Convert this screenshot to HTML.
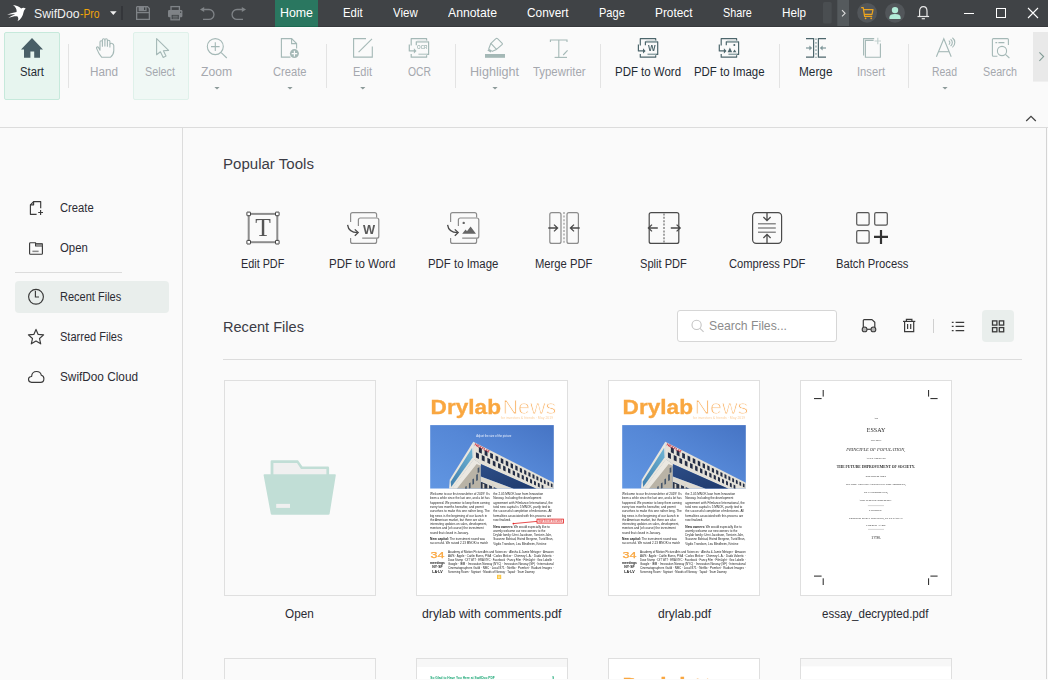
<!DOCTYPE html>
<html><head><meta charset="utf-8"><title>SwifDoo PDF</title>
<style>
html,body{margin:0;padding:0;}
body{width:1048px;height:680px;overflow:hidden;background:#fafafa;position:relative;font-family:"Liberation Sans",sans-serif;}
.t{position:absolute;white-space:nowrap;line-height:1;transform-origin:0 0;}
.a{position:absolute;}
svg{position:absolute;overflow:visible;}

</style></head><body>
<div class="a" style="left:0;top:0;width:1048px;height:26px;background:#404346;border-bottom:1px solid #37393c"></div>
<div class="a" style="left:275px;top:0;width:43px;height:26px;background:#2a7760;border-bottom:1px solid #1d6951"></div>
<div class="a" style="left:0;top:27px;width:1048px;height:1px;background:#ffffff"></div>
<span class="t" style="left:33.60px;top:7.00px;font-size:13px;color:#f2f2f2;transform:scaleX(0.9400);">SwifDoo</span>
<span class="t" style="left:80.10px;top:7.00px;font-size:13px;color:#f0a30a;transform:scaleX(0.7939);">-Pro</span>
<span class="t" style="left:280.00px;top:7.16px;font-size:12.8px;color:#ffffff;transform:scaleX(0.9666);">Home</span>
<span class="t" style="left:343.00px;top:7.16px;font-size:12.8px;color:#ffffff;transform:scaleX(0.8890);">Edit</span>
<span class="t" style="left:392.90px;top:7.16px;font-size:12.8px;color:#ffffff;transform:scaleX(0.8967);">View</span>
<span class="t" style="left:447.60px;top:7.16px;font-size:12.8px;color:#ffffff;transform:scaleX(0.9564);">Annotate</span>
<span class="t" style="left:527.00px;top:7.16px;font-size:12.8px;color:#ffffff;transform:scaleX(0.9261);">Convert</span>
<span class="t" style="left:599.00px;top:7.16px;font-size:12.8px;color:#ffffff;transform:scaleX(0.8631);">Page</span>
<span class="t" style="left:655.10px;top:7.16px;font-size:12.8px;color:#ffffff;transform:scaleX(0.9249);">Protect</span>
<span class="t" style="left:722.80px;top:7.16px;font-size:12.8px;color:#ffffff;transform:scaleX(0.8436);">Share</span>
<span class="t" style="left:782.10px;top:7.16px;font-size:12.8px;color:#ffffff;transform:scaleX(0.9159);">Help</span>
<div class="a" style="left:0;top:127px;width:1048px;height:1px;background:#dcdcdc"></div>
<div class="a" style="left:4px;top:32px;width:54px;height:66px;background:#e7f5ef;border:1px solid #c6e9db;border-radius:2px"></div>
<div class="a" style="left:133px;top:32px;width:54px;height:66px;background:#f0f8f5;border:1px solid #dff1ea;border-radius:2px"></div>
<div class="a" style="left:68px;top:44px;width:1px;height:44px;background:#e3e3e3"></div>
<div class="a" style="left:326px;top:44px;width:1px;height:44px;background:#e3e3e3"></div>
<div class="a" style="left:455px;top:44px;width:1px;height:44px;background:#e3e3e3"></div>
<div class="a" style="left:600px;top:44px;width:1px;height:44px;background:#e3e3e3"></div>
<div class="a" style="left:779px;top:44px;width:1px;height:44px;background:#e3e3e3"></div>
<div class="a" style="left:908px;top:44px;width:1px;height:44px;background:#e3e3e3"></div>
<span class="t" style="left:19.80px;top:65.64px;font-size:12px;color:#1f2b33;transform:scaleX(0.9391);">Start</span>
<span class="t" style="left:90.20px;top:65.64px;font-size:12px;color:#a5a8ae;transform:scaleX(0.9725);">Hand</span>
<span class="t" style="left:145.10px;top:65.64px;font-size:12px;color:#a5a8ae;transform:scaleX(0.8993);">Select</span>
<span class="t" style="left:201.10px;top:65.64px;font-size:12px;color:#a5a8ae;transform:scaleX(1.0107);">Zoom</span>
<span class="t" style="left:273.10px;top:65.64px;font-size:12px;color:#a5a8ae;transform:scaleX(0.9302);">Create</span>
<span class="t" style="left:353.10px;top:65.64px;font-size:12px;color:#a5a8ae;transform:scaleX(0.9191);">Edit</span>
<span class="t" style="left:407.60px;top:65.64px;font-size:12px;color:#a5a8ae;transform:scaleX(0.8623);">OCR</span>
<span class="t" style="left:470.10px;top:65.64px;font-size:12px;color:#a5a8ae;transform:scaleX(1.0495);">Highlight</span>
<span class="t" style="left:532.60px;top:65.64px;font-size:12px;color:#a5a8ae;transform:scaleX(0.9486);">Typewriter</span>
<span class="t" style="left:615.10px;top:65.64px;font-size:12px;color:#1f2b33;transform:scaleX(0.9548);">PDF to Word</span>
<span class="t" style="left:694.10px;top:65.64px;font-size:12px;color:#1f2b33;transform:scaleX(0.9523);">PDF to Image</span>
<span class="t" style="left:799.10px;top:65.64px;font-size:12px;color:#1f2b33;transform:scaleX(0.9848);">Merge</span>
<span class="t" style="left:857.10px;top:65.64px;font-size:12px;color:#a5a8ae;transform:scaleX(0.9328);">Insert</span>
<span class="t" style="left:932.10px;top:65.64px;font-size:12px;color:#a5a8ae;transform:scaleX(0.8715);">Read</span>
<span class="t" style="left:983.10px;top:65.64px;font-size:12px;color:#a5a8ae;transform:scaleX(0.8944);">Search</span>
<div class="a" style="left:182px;top:128px;width:1px;height:551px;background:#dcdcdc"></div>
<div class="a" style="left:1046px;top:128px;width:1px;height:551px;background:#d4d4d4"></div>
<div class="a" style="left:15px;top:272px;width:107px;height:1px;background:#dcdcdc"></div>
<div class="a" style="left:15px;top:281px;width:154px;height:32px;background:#e9eeec;border-radius:4px"></div>
<span class="t" style="left:60.10px;top:201.84px;font-size:12px;color:#2b2b33;transform:scaleX(0.9357);">Create</span>
<span class="t" style="left:60.10px;top:241.84px;font-size:12px;color:#2b2b33;transform:scaleX(0.9469);">Open</span>
<span class="t" style="left:60.10px;top:290.84px;font-size:12px;color:#2b2b33;transform:scaleX(0.9177);">Recent Files</span>
<span class="t" style="left:60.10px;top:330.84px;font-size:12px;color:#2b2b33;transform:scaleX(0.9189);">Starred Files</span>
<span class="t" style="left:60.10px;top:370.84px;font-size:12px;color:#2b2b33;transform:scaleX(0.9827);">SwifDoo Cloud</span>
<span class="t" style="left:222.90px;top:155.96px;font-size:15.4px;color:#3c3c46;transform:scaleX(0.9777);">Popular Tools</span>
<span class="t" style="left:222.90px;top:318.86px;font-size:15.4px;color:#3c3c46;transform:scaleX(0.9459);">Recent Files</span>
<span class="t" style="left:241.30px;top:257.74px;font-size:12.0px;color:#2b2b33;transform:scaleX(0.9018);">Edit PDF</span>
<span class="t" style="left:329.10px;top:257.74px;font-size:12.0px;color:#2b2b33;transform:scaleX(0.9591);">PDF to Word</span>
<span class="t" style="left:428.20px;top:257.74px;font-size:12.0px;color:#2b2b33;transform:scaleX(0.9509);">PDF to Image</span>
<span class="t" style="left:535.00px;top:257.74px;font-size:12.0px;color:#2b2b33;transform:scaleX(0.9357);">Merge PDF</span>
<span class="t" style="left:639.80px;top:257.74px;font-size:12.0px;color:#2b2b33;transform:scaleX(0.9236);">Split PDF</span>
<span class="t" style="left:729.20px;top:257.74px;font-size:12.0px;color:#2b2b33;transform:scaleX(0.9315);">Compress PDF</span>
<span class="t" style="left:836.00px;top:257.74px;font-size:12.0px;color:#2b2b33;transform:scaleX(0.9357);">Batch Process</span>
<div class="a" style="left:677px;top:310px;width:158px;height:30px;background:#fff;border:1px solid #d6d6d6;border-radius:3px"></div>
<span class="t" style="left:709.40px;top:318.87px;font-size:13.5px;color:#8c8c8c;transform:scaleX(0.9029);">Search Files...</span>
<div class="a" style="left:982px;top:310px;width:32px;height:32px;background:#e9eeec;border-radius:4px"></div>
<div class="a" style="left:933px;top:319px;width:1px;height:14px;background:#d0d0d0"></div>
<div class="a" style="left:223px;top:359px;width:799px;height:1px;background:#dcdcdc"></div>
<div class="a" style="left:224px;top:380px;width:150px;height:214px;background:#fafafa;border:1px solid #dfdfdf"></div>
<div class="a" style="left:224px;top:658px;width:150px;height:20px;background:#fafafa;border:1px solid #dfdfdf;border-bottom:none"></div>
<div class="a" style="left:416px;top:380px;width:150px;height:214px;background:#fff;border:1px solid #dfdfdf"></div>
<div class="a" style="left:416px;top:658px;width:150px;height:20px;background:#fff;border:1px solid #dfdfdf;border-bottom:none"></div>
<div class="a" style="left:608px;top:380px;width:150px;height:214px;background:#fff;border:1px solid #dfdfdf"></div>
<div class="a" style="left:608px;top:658px;width:150px;height:20px;background:#fff;border:1px solid #dfdfdf;border-bottom:none"></div>
<div class="a" style="left:800px;top:380px;width:150px;height:214px;background:#fff;border:1px solid #dfdfdf"></div>
<div class="a" style="left:800px;top:658px;width:150px;height:20px;background:#fff;border:1px solid #dfdfdf;border-bottom:none"></div>
<span class="t" style="left:284.80px;top:607.89px;font-size:12.3px;color:#2b2b33;transform:scaleX(0.9542);">Open</span>
<span class="t" style="left:421.60px;top:607.89px;font-size:12.3px;color:#2b2b33;transform:scaleX(0.9997);">drylab with comments.pdf</span>
<span class="t" style="left:657.50px;top:607.89px;font-size:12.3px;color:#2b2b33;transform:scaleX(0.9828);">drylab.pdf</span>
<span class="t" style="left:822.20px;top:607.89px;font-size:12.3px;color:#2b2b33;transform:scaleX(0.9374);">essay_decrypted.pdf</span>
<svg width="1048" height="680" viewBox="0 0 1048 680" style="left:0;top:0;will-change:transform"><g><path d="M13 4.9 C16.6 5.2 19.4 6.6 21.2 8.6 C22.6 7.4 24.2 7.5 25.8 8.7 C24.6 9.3 24 10.4 23.6 12 C22.9 16 20.8 19.6 17.4 21.2 C18.6 19.4 18.6 17.9 17.6 16.4 C15 16.1 12 16.6 8.4 17.9 C10.8 16.1 13 15.2 15.2 14.5 C12.6 14.2 10 14.3 7.2 14.9 C10.4 13 13.8 12.4 16.6 11.9 C17 9.4 15.6 6.6 13 4.9 Z" fill="#ffffff"/>
<polygon points="110,11.3 116.6,11.3 113.3,15" fill="#f0f0f0"/>
<rect x="121.5" y="6" width="1" height="14" fill="#282b2e"/>
<g fill="none" stroke="#7f8387" stroke-width="1.3"><path d="M137.2 6.65 H147.5 L149.35 8.5 V19.35 H136.65 V7.2 Z"/><path d="M136.7 12.6 H149.3"/></g><rect x="138.6" y="6.6" width="8" height="4.6" fill="#7f8387"/><rect x="144" y="7.4" width="1.3" height="2.6" fill="#3e4245"/>
<g><rect x="171" y="6.6" width="8.4" height="4" fill="none" stroke="#7f8387" stroke-width="1.3"/><rect x="168" y="10" width="14.4" height="7.2" rx="1.2" fill="#7f8387"/><rect x="171" y="14.2" width="8.4" height="5.6" fill="#3e4245" stroke="#7f8387" stroke-width="1.3"/><path d="M172.6 16.2 H177.8 M172.6 18 H177.8" stroke="#7f8387" stroke-width="0.9"/><rect x="180" y="11.6" width="1.2" height="1.2" fill="#3e4245"/></g>
<g fill="none" stroke="#7f8387" stroke-width="1.3"><path d="M203 19.4 H209 A4.95 4.95 0 0 0 209 9.5 H203"/><path d="M243 19.4 H237 A4.95 4.95 0 0 1 237 9.5 H243"/></g><polygon points="200,9.5 204.2,7 204.2,12" fill="#7f8387"/><polygon points="246,9.5 241.8,7 241.8,12" fill="#7f8387"/>
<rect x="823" y="2" width="8.7" height="21.6" rx="1.5" fill="#4a4e51"/>
<rect x="837.3" y="0" width="11.7" height="26" fill="#555a5d"/>
<path d="M842 10.2 L845.1 13.3 L842 16.4" fill="none" stroke="#dcdcdc" stroke-width="1.1"/>
<circle cx="867.1" cy="12.8" r="9.9" fill="#52565a"/>
<g fill="none" stroke="#eda51e" stroke-width="1.2" stroke-linejoin="round"><path d="M861.2 7.6 H863.2 L864.6 16.3 H872.2"/><path d="M863.6 9.6 H873 L872 14.4 H864.3"/></g><circle cx="865.6" cy="18.3" r="0.9" fill="#eda51e"/><circle cx="871.2" cy="18.3" r="0.9" fill="#eda51e"/>
<circle cx="895" cy="12.8" r="9.9" fill="#52565a"/>
<circle cx="895" cy="10.1" r="3.2" fill="#b2ecd8"/><path d="M889.4 18.9 V17.4 C889.4 15 891.4 13.9 895 13.9 C898.6 13.9 900.6 15 900.6 17.4 V18.9 Z" fill="#b2ecd8"/>
<g fill="none" stroke="#e8e8e8" stroke-width="1.2"><path d="M919.6 16.4 V11.2 C919.6 8.4 921 6.6 923.3 6.6 C925.6 6.6 927 8.4 927 11.2 V16.4"/><path d="M917.5 16.5 H929.1"/><path d="M921.7 18.7 H924.9"/></g>
<path d="M964 13.5 H974" stroke="#ffffff" stroke-width="1"/>
<rect x="996.5" y="8.5" width="9" height="9" fill="none" stroke="#ffffff" stroke-width="1"/>
<path d="M1028 8 L1038 18 M1038 8 L1028 18" stroke="#ffffff" stroke-width="1.1"/>
<path d="M32 38 L43 49.6 H40 V57.8 H34.2 V51.6 H30.4 V57.8 H24 V49.6 H21 Z" fill="#495f67"/>
<g fill="none" stroke="#a4b8b6" stroke-width="1.1" stroke-linejoin="round"><path d="M101.8 57.3 C99.6 55 97.8 51.6 96.6 48.4 C96.1 47 97.7 46.2 98.5 47.5 L100 50.2 V41.9 C100 40.3 102.4 40.3 102.4 41.9 V40 C102.4 38.4 104.9 38.4 104.9 40 C104.9 38.4 107.4 38.4 107.4 40 V41.4 C107.4 39.8 109.9 39.8 109.9 41.4 V44 C110.6 42.6 113.8 43.2 113.8 45.8 V50.4 C113.8 53.4 112.4 55.6 110.4 57.3 Z"/><path d="M102.4 41.9 V46.8 M104.9 40 V46.6 M107.4 41.4 V46.8 M109.9 44 V47.4"/></g>
<path d="M156.6 38.6 V54.8 L160.4 51.8 L163.2 57.4 L166 56.1 L163.4 50.8 L168.6 50.4 Z" fill="none" stroke="#a4b8b6" stroke-width="1.1" stroke-linejoin="round"/>
<g fill="none" stroke="#a4b8b6" stroke-width="1.1"><circle cx="215.3" cy="46.6" r="8"/><path d="M221.2 52.6 L226.8 58"/><path d="M211 46.6 H219.6 M215.3 42.3 V50.9"/></g>
<polygon points="214.4,86.9 219.6,86.9 217,89.5" fill="#8c9a99"/>
<polygon points="287.4,86.9 292.6,86.9 290,89.5" fill="#8c9a99"/>
<polygon points="360.2,86.9 365.40000000000003,86.9 362.8,89.5" fill="#8c9a99"/>
<polygon points="492.4,86.9 497.6,86.9 495,89.5" fill="#8c9a99"/>
<polygon points="942.4,86.9 947.6,86.9 945,89.5" fill="#8c9a99"/>
<g fill="none" stroke="#a4b8b6" stroke-width="1.1"><path d="M290.5 57.1 H281.4 V38.6 H291.6 L296.6 43.6 V48.6"/><path d="M291.6 38.6 V43.6 H296.6"/></g><circle cx="294.4" cy="53.6" r="4.5" fill="#a4b8b6"/><path d="M291.6 53.6 H297.2 M294.4 50.8 V56.4" stroke="#fafafa" stroke-width="1.2"/>
<g fill="none" stroke="#a4b8b6" stroke-width="1.1"><path d="M366 38.6 H353.6 V57.1 H372.3 V46.6"/><path d="M358.6 52.2 L372 38.8"/></g>
<g fill="none" stroke="#a4b8b6" stroke-width="1.2" stroke-linejoin="round"><path d="M411.2 45.6 V38.7 H426.59999999999997 V40.6"/><path d="M411.2 54 V57.2 H426.59999999999997 V55.2"/><path d="M416.3 45.2 V41.8 H428.59999999999997 V54.4 H426.8"/><path d="M409.3 44.4 V50.9 H414.90000000000003"/></g><path d="M417.2 41.3 H427.8" stroke="#c3d1cf" stroke-width="1.2"/><path d="M418.4 54.3 H427.2" stroke="#c3d1cf" stroke-width="1.5"/><polygon points="413.90000000000003,48.2 416.5,50.9 413.90000000000003,53.6" fill="#a4b8b6"/><text x="422.2" y="48.9" font-size="5.4" font-weight="bold" fill="#a4b8b6" text-anchor="middle" font-family="Liberation Sans, sans-serif" textLength="10.4" lengthAdjust="spacingAndGlyphs">OCR</text>
<g fill="none" stroke="#4d666c" stroke-width="1.2" stroke-linejoin="round"><path d="M640.3 45.6 V38.7 H655.6999999999999 V40.6"/><path d="M640.3 54 V57.2 H655.6999999999999 V55.2"/><path d="M645.4 45.2 V41.8 H657.6999999999999 V54.4 H655.9"/><path d="M638.4 44.4 V50.9 H644.0"/></g><path d="M646.3 41.3 H656.9" stroke="#8fa3a6" stroke-width="1.2"/><path d="M647.5 54.3 H656.3" stroke="#8fa3a6" stroke-width="1.5"/><polygon points="643.0,48.2 645.6,50.9 643.0,53.6" fill="#4d666c"/><text x="651.7" y="50.8" font-size="9.5" font-weight="bold" fill="#4d666c" text-anchor="middle" font-family="Liberation Sans, sans-serif" textLength="7.6" lengthAdjust="spacingAndGlyphs">W</text>
<g fill="none" stroke="#4d666c" stroke-width="1.2" stroke-linejoin="round"><path d="M721.1999999999999 45.6 V38.7 H736.5999999999999 V40.6"/><path d="M721.1999999999999 54 V57.2 H736.5999999999999 V55.2"/><path d="M726.3 45.2 V41.8 H738.5999999999999 V54.4 H736.8"/><path d="M719.3 44.4 V50.9 H724.9"/></g><path d="M727.1999999999999 41.3 H737.8" stroke="#8fa3a6" stroke-width="1.2"/><path d="M728.4 54.3 H737.1999999999999" stroke="#8fa3a6" stroke-width="1.5"/><polygon points="723.9,48.2 726.5,50.9 723.9,53.6" fill="#4d666c"/><polygon points="727.6,52.2 729.9,47.4 732.2,52.2" fill="#4d666c"/><polygon points="732.8,52.2 734.6,49.4 736.4,52.2" fill="#4d666c"/><circle cx="734.3" cy="44.9" r="1" fill="#4d666c"/>
<rect x="485" y="54" width="20" height="3.8" fill="#a4b8b6"/>
<g fill="none" stroke="#a4b8b6" stroke-width="1.1" stroke-linejoin="round"><path d="M495.9 38.7 Q496.7 37.9 497.5 38.7 L502 43.1 Q502.8 43.9 502 44.6 L496.5 49.4 L490.9 43.3 Z"/><path d="M490.9 43.3 L488.7 49 M496.5 49.4 L491.8 51.4"/></g><polygon points="487.4,50.4 490.7,52.5 492,50.6 488.8,48.7" fill="#a4b8b6"/>
<g fill="none" stroke="#a4b8b6" stroke-width="1.1"><path d="M550.4 42 V40 H567 V42"/><path d="M558.8 40 V57.4"/><path d="M554.6 57.4 H567"/><path d="M563.2 55 L567.6 50.4"/></g>
<g fill="none" stroke="#4d666c" stroke-width="1.2"><path d="M806 38.7 H813.6 V57.2 H806"/><path d="M826 38.7 H818.4 V57.2 H826"/></g><path d="M816 38.2 V58" stroke="#93a8aa" stroke-width="1.4" stroke-dasharray="1.8 1.9"/><g stroke="#7f979a" stroke-width="1.2" fill="none"><path d="M806 48 H811"/><path d="M826 48 H821"/></g><polygon points="809.4,45.4 812.2,48 809.4,50.6" fill="#7f979a"/><polygon points="822.6,45.4 819.8,48 822.6,50.6" fill="#7f979a"/>
<g fill="none" stroke="#a4b8b6" stroke-width="1.1"><path d="M863.6 55.4 V38.6 H874.2"/><path d="M873.6 40.4 H865.4 V57.2 H880.4 V43.6"/></g><path d="M874.6 41 H881 M877.8 37.8 V44.2" stroke="#c3d1cf" stroke-width="1.2"/>
<g fill="none" stroke="#a4b8b6" stroke-width="1.1"><path d="M936.4 56.8 L943.8 38.8 L951.2 56.8"/><path d="M938.6 51.7 H949"/><path d="M948.8 40.6 A2.4 2.4 0 0 1 948.8 44.6"/><path d="M950.6 39.2 A4.2 4.2 0 0 1 950.6 46"/><path d="M952.4 37.8 A6 6 0 0 1 952.4 47.4"/></g>
<g fill="none" stroke="#a4b8b6" stroke-width="1.1"><path d="M997.4 56.2 H993.4 Q992.4 56.2 992.4 55.2 V39.6 Q992.4 38.6 993.4 38.6 H1007.4 Q1008.4 38.6 1008.4 39.6 V45"/><circle cx="1002" cy="51" r="4.6"/><path d="M1005.4 54.4 L1009.4 58"/><path d="M995.4 42.6 H997.2 M998.4 42.6 H1004.4"/></g>
<rect x="1033" y="32" width="15" height="49.6" fill="#e9e9e9"/>
<path d="M1039.4 52.4 L1043.6 56.6 L1039.4 60.8" fill="none" stroke="#7f9a94" stroke-width="1.1"/>
<path d="M1026.2 121 L1031 116.4 L1035.8 121" fill="none" stroke="#444" stroke-width="1.3"/>
<g fill="none" stroke="#3a3a3a" stroke-width="1.15" stroke-linejoin="round"><path d="M36.6 214.3 H30.4 V204.8 L33.6 201.6 H40.7 V208.2"/><path d="M30.4 204.8 H33.6 V201.6"/><path d="M38.2 212.5 H43 M40.6 210.1 V214.9"/></g>
<g fill="none" stroke="#3a3a3a" stroke-width="1.15" stroke-linejoin="round"><path d="M30.4 242.7 H35.6 V246 H42.4 V253.4 Q42.4 254.2 41.6 254.2 H30.4 Q29.6 254.2 29.6 253.4 V243.5 Q29.6 242.7 30.4 242.7 Z"/></g><rect x="36" y="243.6" width="6.9" height="2" fill="#8a8a8a"/><path d="M36 243.6 H42.4 V246" fill="none" stroke="#3a3a3a" stroke-width="0.9"/><rect x="32.4" y="250.6" width="6.2" height="1.5" fill="#8a8a8a"/>
<g fill="none" stroke="#3a3a3a" stroke-width="1.15"><circle cx="36" cy="296.8" r="7.4"/><path d="M35.4 290.8 V297 H39"/></g>
<polygon points="36.00,329.40 38.17,334.41 43.61,334.93 39.52,338.54 40.70,343.87 36.00,341.10 31.30,343.87 32.48,338.54 28.39,334.93 33.83,334.41" fill="none" stroke="#3a3a3a" stroke-width="1.15" stroke-linejoin="round"/>
<path d="M31.6 382.3 C29.6 382.3 28.5 380.9 28.5 379.3 C28.5 377.6 29.9 376.4 31.6 376.5 C31.8 373.6 33.8 371.5 36.6 371.5 C39 371.5 40.8 373 41.3 375.2 C43 375.5 43.9 377 43.9 378.7 C43.9 380.7 42.5 382.3 40.6 382.3 Z" fill="none" stroke="#3a3a3a" stroke-width="1.15"/>
<rect x="248.7" y="213.9" width="28.6" height="28.3" fill="none" stroke="#8c8c8c" stroke-width="2"/>
<rect x="246.89999999999998" y="212.1" width="3.6" height="3.6" rx="0.3" fill="#fff" stroke="#444" stroke-width="1"/>
<rect x="275.5" y="212.1" width="3.6" height="3.6" rx="0.3" fill="#fff" stroke="#444" stroke-width="1"/>
<rect x="246.89999999999998" y="240.39999999999998" width="3.6" height="3.6" rx="0.3" fill="#fff" stroke="#444" stroke-width="1"/>
<rect x="275.5" y="240.39999999999998" width="3.6" height="3.6" rx="0.3" fill="#fff" stroke="#444" stroke-width="1"/>
<text x="263" y="236" font-size="25.5" fill="#555" text-anchor="middle" font-family="Liberation Serif, serif">T</text>
<g fill="none" stroke="#8c8c8c" stroke-width="1.2" stroke-linejoin="round"><path d="M350.6 222 V214.6 Q350.6 212.6 352.6 212.6 H374.6 Q376.6 212.6 376.6 214.6 V217.6"/><path d="M350.6 238 V241.4 Q350.6 243.4 352.6 243.4 H374.6 Q376.6 243.4 376.6 241.4 V238.6"/><path d="M358.40000000000003 226 V220 Q358.40000000000003 218 360.40000000000003 218 H376.8 Q378.8 218 378.8 220 V236.2 Q378.8 238.2 376.8 238.2 H362.20000000000005"/></g><path d="M347.6 224.8 C348.20000000000005 229.6 352.20000000000005 232.4 357.6 232.6" fill="none" stroke="#4a4a4a" stroke-width="1.3"/><path d="M354.8 229.4 L358.20000000000005 232.6 L354.8 235.8" fill="none" stroke="#4a4a4a" stroke-width="1.3"/><text x="369.1" y="233.6" font-size="12.8" font-weight="bold" fill="#5a5a5a" text-anchor="middle" font-family="Liberation Sans, sans-serif">W</text>
<g fill="none" stroke="#8c8c8c" stroke-width="1.2" stroke-linejoin="round"><path d="M450.6 222 V214.6 Q450.6 212.6 452.6 212.6 H474.6 Q476.6 212.6 476.6 214.6 V217.6"/><path d="M450.6 238 V241.4 Q450.6 243.4 452.6 243.4 H474.6 Q476.6 243.4 476.6 241.4 V238.6"/><path d="M458.40000000000003 226 V220 Q458.40000000000003 218 460.40000000000003 218 H476.8 Q478.8 218 478.8 220 V236.2 Q478.8 238.2 476.8 238.2 H462.20000000000005"/></g><path d="M447.6 224.8 C448.20000000000005 229.6 452.20000000000005 232.4 457.6 232.6" fill="none" stroke="#4a4a4a" stroke-width="1.3"/><path d="M454.8 229.4 L458.20000000000005 232.6 L454.8 235.8" fill="none" stroke="#4a4a4a" stroke-width="1.3"/><polygon points="462.2,233.8 465.6,229.6 467,231.2 470.6,226.4 476,233.8" fill="#666"/><circle cx="463.7" cy="222.9" r="1.2" fill="#666"/>
<g fill="none" stroke="#8c8c8c" stroke-width="1.2"><rect x="549.8" y="212.6" width="11.2" height="30.8" rx="2"/><rect x="567" y="212.6" width="11.4" height="30.8" rx="2"/></g><path d="M564 212 V244" stroke="#b0b0b0" stroke-width="1.6" stroke-dasharray="2 1.6"/><g fill="none" stroke="#4a4a4a" stroke-width="1.3"><path d="M548.3 228 H557.4 M554 224.6 L557.6 228 L554 231.4"/><path d="M579.7 228 H570.6 M574 224.6 L570.4 228 L574 231.4"/></g>
<rect x="649.2" y="212.6" width="29.6" height="30.8" rx="2" fill="none" stroke="#4a4a4a" stroke-width="1.2"/><path d="M664 213.4 V243" stroke="#777" stroke-width="1.3" stroke-dasharray="2 1.4"/><g fill="none" stroke="#4a4a4a" stroke-width="1.3"><path d="M657.8 228 H648.6 M652 224.6 L648.4 228 L652 231.4"/><path d="M670.8 228 H680 M676.6 224.6 L680.2 228 L676.6 231.4"/></g>
<rect x="752.6" y="212.6" width="29" height="30.8" rx="3.6" fill="none" stroke="#4a4a4a" stroke-width="1.2"/><path d="M758 223.7 H775.8 M758 228 H775.8 M758 232.2 H775.8" stroke="#8c8c8c" stroke-width="1.5"/><g fill="none" stroke="#4a4a4a" stroke-width="1.3"><path d="M767 213 V220.4 M763.4 217 L767 220.6 L770.6 217"/><path d="M767 243 V234.6 M763.4 238 L767 234.4 L770.6 238"/></g>
<g fill="none" stroke="#555" stroke-width="1.2"><rect x="856.7" y="212.7" width="12.4" height="12.4" rx="1.4"/><rect x="874.7" y="212.7" width="12.6" height="12.4" rx="1.4"/><rect x="856.7" y="230.7" width="12.4" height="12.5" rx="1.4"/></g><path d="M874 236.9 H888 M881 229.9 V243.9" stroke="#333" stroke-width="2.2"/>
<g fill="none" stroke="#c4c4c4" stroke-width="1.1"><circle cx="696.6" cy="324.9" r="4.6"/><path d="M700 328.4 L703.6 331.8"/></g>
<g fill="none" stroke="#3a3a3a" stroke-width="1.2" stroke-linejoin="round"><path d="M863.3 327 V320.6 Q863.3 319.6 864.3 319.6 H872 L874.8 322.2 V327"/><path d="M867.1 329.3 H870.9"/></g><circle cx="864.6" cy="329.4" r="2.4" fill="#b4b4b4" stroke="#3a3a3a" stroke-width="1.1"/><circle cx="873.4" cy="329.4" r="2.4" fill="#b4b4b4" stroke="#3a3a3a" stroke-width="1.1"/>
<g fill="none" stroke="#3a3a3a" stroke-width="1.2"><path d="M903 321.4 H915.3"/><path d="M906.4 321.2 V319.4 H911.9 V321.2"/><path d="M904.6 321.4 V331.6 H913.7 V321.4"/><path d="M907.6 324 V329 M910.7 324 V329"/></g>
<g stroke="#3a3a3a" stroke-width="1.2"><path d="M955.6 322.3 H964.2 M955.6 326.4 H964.2 M955.6 330.6 H964.2"/><path d="M951.8 322.3 H953.6 M951.8 326.4 H953.6 M951.8 330.6 H953.6"/></g>
<g fill="none" stroke="#3a3a3a" stroke-width="1.3"><rect x="992.5" y="320.9" width="4.4" height="4.2"/><rect x="999.3" y="320.9" width="4.4" height="4.2"/><rect x="992.5" y="327.6" width="4.4" height="4.2"/><rect x="999.3" y="327.6" width="4.4" height="4.2"/></g>
<path d="M270.6 476 V461.6 Q270.6 460.3 271.9 460.3 H298 L302.4 466.6 H327.8 Q329.1 466.6 329.1 467.9 V476 Z" fill="#c1ded6"/>
<path d="M273.4 476 V463 H297 L301 468.9 H326.4 V476 Z" fill="#f0f0f0"/>
<path d="M264.4 474.2 H335 Q336 474.2 335.8 475.2 L329.6 513.8 Q329.4 514.8 328.4 514.8 H272 Q271 514.8 270.8 513.8 L263.6 475.2 Q263.4 474.2 264.4 474.2 Z" fill="#c1ded6"/>
<rect x="276.2" y="503.9" width="13.8" height="4" fill="#f0f0f0"/></g></svg>
<svg width="1048" height="680" viewBox="0 0 1048 680" style="left:0;top:0;will-change:transform"><g><defs>
<linearGradient id="sky" x1="0" y1="1" x2="1" y2="0"><stop offset="0" stop-color="#6196e2"/><stop offset="0.55" stop-color="#5587d6"/><stop offset="1" stop-color="#4674c4"/></linearGradient>
<linearGradient id="glass" x1="0" y1="0" x2="1" y2="1"><stop offset="0" stop-color="#2d4e88"/><stop offset="1" stop-color="#1f3a6c"/></linearGradient>
<linearGradient id="lglass" x1="1" y1="0" x2="0" y2="1"><stop offset="0" stop-color="#6fb4d4"/><stop offset="1" stop-color="#3f7fae"/></linearGradient>
<clipPath id="photoclip"><rect x="622.1" y="425.1" width="123.8" height="63.6"/></clipPath>
<clipPath id="row2clip"><rect x="0" y="659" width="1048" height="20"/></clipPath>
</defs>
<g font-family="Liberation Sans, sans-serif">
<text x="622.6" y="413.6" font-size="19.3" font-weight="bold" fill="#f9a740" stroke="#f9a740" stroke-width="0.3" textLength="70.4" lengthAdjust="spacingAndGlyphs">Drylab</text><text x="694.4" y="413.6" font-size="19.3" fill="#f9b060" stroke="#ffffff" stroke-width="0.85" textLength="54" lengthAdjust="spacingAndGlyphs">News</text><text x="692.80" y="419.30" font-size="3.2" fill="#fbd0a0" textLength="52.40" lengthAdjust="spacingAndGlyphs">for investors &amp; friends · May 2019</text><g clip-path="url(#photoclip)"><rect x="622.1" y="425.1" width="123.8" height="63.6" fill="url(#sky)"/><polygon points="665.29,441.85 745.93,482.79 745.93,488.75 727.94,488.75 671.49,463.56 665.91,459.22" fill="#e4e1d8"/><polygon points="672.73,463.94 728.56,488.75 705.61,488.75 672.73,476.59" fill="url(#glass)"/><polygon points="672.73,476.59 705.61,488.75 689.48,488.75 672.73,481.80" fill="#dedad0"/><polygon points="672.73,481.80 689.48,488.75 672.73,488.75" fill="#2c3446"/><polygon points="674.59,483.41 676.33,484.16 676.33,488.75 674.59,488.75" fill="#d8d4ca"/><polygon points="679.31,483.41 681.04,484.16 681.04,488.75 679.31,488.75" fill="#d8d4ca"/><polygon points="684.02,483.41 685.76,484.16 685.76,488.75 684.02,488.75" fill="#d8d4ca"/><polygon points="665.91,459.22 644.19,488.75 672.73,488.75 672.73,463.94 671.49,463.32" fill="#b9b3a6"/><polygon points="665.91,459.22 644.19,488.75 648.78,488.75 668.64,463.94 672.73,465.67 672.73,463.94 671.49,463.32" fill="#ebe8e1"/><polygon points="668.14,474.85 669.88,474.11 669.88,480.31 668.14,481.06" fill="#46566a"/><polygon points="664.42,479.20 666.03,478.45 666.03,484.03 664.42,484.78" fill="#46566a"/><polygon points="660.94,483.29 662.56,482.55 662.56,488.00 660.94,488.75" fill="#46566a"/><polygon points="657.22,486.76 658.71,486.02 658.71,489.62 657.22,490.36" fill="#46566a"/><polygon points="669.63,468.03 671.36,467.29 671.36,472.25 669.63,472.99" fill="#46566a"/><polygon points="665.29,441.85 641.71,479.69 641.09,488.75 644.44,488.75 666.03,459.22" fill="#e9e6de"/><polygon points="664.17,447.68 642.70,481.80 643.20,486.89 664.54,457.61" fill="url(#lglass)"/><polygon points="665.29,441.85 666.03,459.22 666.53,459.47 665.78,442.10" fill="#f4f2ec"/><polygon points="670.87,447.02 673.84,448.51 673.84,453.79 670.87,452.31" fill="#222c44"/><polygon points="667.96,452.17 670.93,453.65 670.93,458.94 667.96,457.45" fill="#222c44"/><polygon points="676.63,449.92 679.50,451.35 679.50,456.50 676.63,455.07" fill="#222c44"/><polygon points="673.77,455.03 676.64,456.46 676.64,461.61 673.77,460.18" fill="#222c44"/><polygon points="682.20,452.72 684.96,454.10 684.96,459.11 682.20,457.73" fill="#222c44"/><polygon points="679.39,457.80 682.15,459.18 682.15,464.19 679.39,462.81" fill="#222c44"/><polygon points="687.57,455.42 690.24,456.76 690.24,461.63 687.57,460.30" fill="#222c44"/><polygon points="684.81,460.47 687.48,461.80 687.48,466.68 684.81,465.35" fill="#222c44"/><polygon points="692.76,458.04 695.33,459.32 695.33,464.07 692.76,462.79" fill="#222c44"/><polygon points="690.05,463.05 692.62,464.33 692.62,469.09 690.05,467.80" fill="#222c44"/><polygon points="697.78,460.56 700.26,461.80 700.26,466.43 697.78,465.19" fill="#222c44"/><polygon points="695.11,465.54 697.59,466.78 697.59,471.41 695.11,470.17" fill="#222c44"/><polygon points="702.62,463.00 705.01,464.19 705.01,468.70 702.62,467.51" fill="#222c44"/><polygon points="700.00,467.95 702.39,469.15 702.39,473.66 700.00,472.46" fill="#222c44"/><polygon points="707.30,465.35 709.61,466.50 709.61,470.90 707.30,469.75" fill="#222c44"/><polygon points="704.72,470.28 707.03,471.43 707.03,475.82 704.72,474.67" fill="#222c44"/><polygon points="711.82,467.63 714.05,468.74 714.05,473.02 711.82,471.91" fill="#222c44"/><polygon points="709.29,472.52 711.51,473.63 711.51,477.92 709.29,476.81" fill="#222c44"/><polygon points="716.19,469.82 718.33,470.89 718.33,475.07 716.19,474.00" fill="#222c44"/><polygon points="713.69,474.69 715.84,475.77 715.84,479.94 713.69,478.87" fill="#222c44"/><polygon points="720.41,471.94 722.48,472.98 722.48,477.05 720.41,476.02" fill="#222c44"/><polygon points="717.95,476.79 720.02,477.82 720.02,481.90 717.95,480.87" fill="#222c44"/><polygon points="724.49,473.99 726.48,474.99 726.48,478.97 724.49,477.97" fill="#222c44"/><polygon points="722.06,478.82 724.06,479.81 724.06,483.79 722.06,482.79" fill="#222c44"/><polygon points="728.42,475.98 730.34,476.93 730.34,480.82 728.42,479.86" fill="#222c44"/><polygon points="726.04,480.77 727.96,481.73 727.96,485.61 726.04,484.65" fill="#222c44"/><polygon points="732.23,477.89 734.08,478.81 734.08,482.60 732.23,481.68" fill="#222c44"/><polygon points="729.88,482.66 731.72,483.59 731.72,487.38 729.88,486.45" fill="#222c44"/><polygon points="735.90,479.74 737.68,480.63 737.68,484.33 735.90,483.44" fill="#222c44"/><polygon points="733.58,484.49 735.36,485.38 735.36,489.08 733.58,488.19" fill="#222c44"/><polygon points="739.45,481.52 741.17,482.38 741.17,485.99 739.45,485.13" fill="#222c44"/><polygon points="742.88,483.25 744.53,484.07 744.53,487.60 742.88,486.78" fill="#222c44"/><text x="666.15" y="445.33" transform="rotate(27 666.15 445.33)" font-size="3.4" font-weight="bold" fill="#c3142d" font-family="Liberation Sans, sans-serif" textLength="16.5" lengthAdjust="spacingAndGlyphs">NETFLIX</text></g><text x="622.10" y="495.20" font-size="3.25" fill="#1c1c1c" textLength="59.60" lengthAdjust="spacingAndGlyphs">Welcome to our first newsletter of 2019! It's</text><text x="622.10" y="499.46" font-size="3.25" fill="#1c1c1c" textLength="59.60" lengthAdjust="spacingAndGlyphs">been a while since the last one, and a lot has</text><text x="622.10" y="503.73" font-size="3.25" fill="#1c1c1c" textLength="59.60" lengthAdjust="spacingAndGlyphs">happened. We promise to keep them coming</text><text x="622.10" y="508.00" font-size="3.25" fill="#1c1c1c" textLength="53.50" lengthAdjust="spacingAndGlyphs">every two months hereafter, and permit</text><text x="622.10" y="512.26" font-size="3.25" fill="#1c1c1c" textLength="59.60" lengthAdjust="spacingAndGlyphs">ourselves to make this one rather long. The</text><text x="622.10" y="516.52" font-size="3.25" fill="#1c1c1c" textLength="57.00" lengthAdjust="spacingAndGlyphs">big news is the beginning of our launch in</text><text x="622.10" y="520.79" font-size="3.25" fill="#1c1c1c" textLength="53.50" lengthAdjust="spacingAndGlyphs">the American market, but there are also</text><text x="622.10" y="525.05" font-size="3.25" fill="#1c1c1c" textLength="57.00" lengthAdjust="spacingAndGlyphs">interesting updates on sales, development,</text><text x="622.10" y="529.32" font-size="3.25" fill="#1c1c1c" textLength="53.50" lengthAdjust="spacingAndGlyphs">mentors and (of course) the investment</text><text x="622.10" y="533.59" font-size="3.25" fill="#1c1c1c" textLength="38.50" lengthAdjust="spacingAndGlyphs">round that closed in January.</text><text x="622.10" y="540.20" font-size="3.25" fill="#1c1c1c" font-weight="bold" textLength="19.00" lengthAdjust="spacingAndGlyphs">New capital:</text><text x="641.60" y="540.20" font-size="3.25" fill="#1c1c1c" textLength="35.50" lengthAdjust="spacingAndGlyphs">The investment round was</text><text x="622.10" y="544.46" font-size="3.25" fill="#1c1c1c" textLength="58.00" lengthAdjust="spacingAndGlyphs">successful. We raised 2.13 MNOK to match</text><text x="685.30" y="495.20" font-size="3.25" fill="#1c1c1c" textLength="50.00" lengthAdjust="spacingAndGlyphs">the 2.05 MNOK loan from Innovation</text><text x="685.30" y="499.46" font-size="3.25" fill="#1c1c1c" textLength="48.00" lengthAdjust="spacingAndGlyphs">Norway. Including the development</text><text x="685.30" y="503.73" font-size="3.25" fill="#1c1c1c" textLength="59.50" lengthAdjust="spacingAndGlyphs">agreement with Filmlance International, the</text><text x="685.30" y="508.00" font-size="3.25" fill="#1c1c1c" textLength="57.00" lengthAdjust="spacingAndGlyphs">total new capital is 5 MNOK, partly tied to</text><text x="685.30" y="512.26" font-size="3.25" fill="#1c1c1c" textLength="58.50" lengthAdjust="spacingAndGlyphs">the successful completion of milestones. All</text><text x="685.30" y="516.52" font-size="3.25" fill="#1c1c1c" textLength="58.00" lengthAdjust="spacingAndGlyphs">formalities associated with this process are</text><text x="685.30" y="520.79" font-size="3.25" fill="#1c1c1c" textLength="17.60" lengthAdjust="spacingAndGlyphs">now finalized.</text><text x="685.30" y="527.53" font-size="3.25" fill="#1c1c1c" font-weight="bold" textLength="20.00" lengthAdjust="spacingAndGlyphs">New owners:</text><text x="705.80" y="527.53" font-size="3.25" fill="#1c1c1c" textLength="36.00" lengthAdjust="spacingAndGlyphs">We would especially like to</text><text x="685.30" y="531.79" font-size="3.25" fill="#1c1c1c" textLength="52.00" lengthAdjust="spacingAndGlyphs">warmly welcome our new owners to the</text><text x="685.30" y="536.06" font-size="3.25" fill="#1c1c1c" textLength="58.50" lengthAdjust="spacingAndGlyphs">Drylab family: Unni Jacobsen, Torstein Jahr,</text><text x="685.30" y="540.32" font-size="3.25" fill="#1c1c1c" textLength="60.00" lengthAdjust="spacingAndGlyphs">Suzanne Bolstad, Eivind Bergene, Turid Brun,</text><text x="685.30" y="544.59" font-size="3.25" fill="#1c1c1c" textLength="53.00" lengthAdjust="spacingAndGlyphs">Vigdis Trondsen, Lea Blindheim, Kristine</text><text x="622.5" y="558.2" font-size="9.9" fill="#f9a53d" stroke="#f9a53d" stroke-width="0.25" textLength="13.9" lengthAdjust="spacingAndGlyphs">34</text><text x="622.10" y="563.60" font-size="3.25" fill="#111" font-weight="bold" textLength="14.80" lengthAdjust="spacingAndGlyphs">meetings</text><text x="624.20" y="568.10" font-size="3.25" fill="#111" font-weight="bold" textLength="10.40" lengthAdjust="spacingAndGlyphs">NY·SF</text><text x="624.20" y="572.70" font-size="3.25" fill="#111" font-weight="bold" textLength="10.40" lengthAdjust="spacingAndGlyphs">LA·LV</text><text x="639.90" y="553.10" font-size="3.1" fill="#1c1c1c" textLength="105.90" lengthAdjust="spacingAndGlyphs">Academy of Motion Picture Arts and Sciences · Alesha &amp; Jamie Metzger · Amazon</text><text x="639.90" y="557.16" font-size="3.1" fill="#1c1c1c" textLength="105.90" lengthAdjust="spacingAndGlyphs">AWS · Apple · Caitlin Burns, PGA · Carlos Melcer · Chimney L.A. · Dado Valentic ·</text><text x="639.90" y="561.22" font-size="3.1" fill="#1c1c1c" textLength="105.90" lengthAdjust="spacingAndGlyphs">Dave Stump · DIT WIT · ERA NYC · Facebook · Fancy Film · FilmLight · Geo Labelle ·</text><text x="639.90" y="565.28" font-size="3.1" fill="#1c1c1c" textLength="105.90" lengthAdjust="spacingAndGlyphs">Google · IBM · Innovation Norway (NYC) · Innovation Norway (SF) · International</text><text x="639.90" y="569.34" font-size="3.1" fill="#1c1c1c" textLength="105.90" lengthAdjust="spacingAndGlyphs">Cinematographers Guild · NBC · Local 871 · Netflix · Pomfort · Radiant Images ·</text><text x="639.90" y="573.40" font-size="3.1" fill="#1c1c1c" textLength="86.80" lengthAdjust="spacingAndGlyphs">Screening Room · Signiant · Moods of Norway · Tapad · Team Downey</text>
<g transform="translate(-192 0)"><text x="622.6" y="413.6" font-size="19.3" font-weight="bold" fill="#f9a740" stroke="#f9a740" stroke-width="0.3" textLength="70.4" lengthAdjust="spacingAndGlyphs">Drylab</text><text x="694.4" y="413.6" font-size="19.3" fill="#f9b060" stroke="#ffffff" stroke-width="0.85" textLength="54" lengthAdjust="spacingAndGlyphs">News</text><text x="692.80" y="419.30" font-size="3.2" fill="#fbd0a0" textLength="52.40" lengthAdjust="spacingAndGlyphs">for investors &amp; friends · May 2019</text><g clip-path="url(#photoclip)"><rect x="622.1" y="425.1" width="123.8" height="63.6" fill="url(#sky)"/><polygon points="665.29,441.85 745.93,482.79 745.93,488.75 727.94,488.75 671.49,463.56 665.91,459.22" fill="#e4e1d8"/><polygon points="672.73,463.94 728.56,488.75 705.61,488.75 672.73,476.59" fill="url(#glass)"/><polygon points="672.73,476.59 705.61,488.75 689.48,488.75 672.73,481.80" fill="#dedad0"/><polygon points="672.73,481.80 689.48,488.75 672.73,488.75" fill="#2c3446"/><polygon points="674.59,483.41 676.33,484.16 676.33,488.75 674.59,488.75" fill="#d8d4ca"/><polygon points="679.31,483.41 681.04,484.16 681.04,488.75 679.31,488.75" fill="#d8d4ca"/><polygon points="684.02,483.41 685.76,484.16 685.76,488.75 684.02,488.75" fill="#d8d4ca"/><polygon points="665.91,459.22 644.19,488.75 672.73,488.75 672.73,463.94 671.49,463.32" fill="#b9b3a6"/><polygon points="665.91,459.22 644.19,488.75 648.78,488.75 668.64,463.94 672.73,465.67 672.73,463.94 671.49,463.32" fill="#ebe8e1"/><polygon points="668.14,474.85 669.88,474.11 669.88,480.31 668.14,481.06" fill="#46566a"/><polygon points="664.42,479.20 666.03,478.45 666.03,484.03 664.42,484.78" fill="#46566a"/><polygon points="660.94,483.29 662.56,482.55 662.56,488.00 660.94,488.75" fill="#46566a"/><polygon points="657.22,486.76 658.71,486.02 658.71,489.62 657.22,490.36" fill="#46566a"/><polygon points="669.63,468.03 671.36,467.29 671.36,472.25 669.63,472.99" fill="#46566a"/><polygon points="665.29,441.85 641.71,479.69 641.09,488.75 644.44,488.75 666.03,459.22" fill="#e9e6de"/><polygon points="664.17,447.68 642.70,481.80 643.20,486.89 664.54,457.61" fill="url(#lglass)"/><polygon points="665.29,441.85 666.03,459.22 666.53,459.47 665.78,442.10" fill="#f4f2ec"/><polygon points="670.87,447.02 673.84,448.51 673.84,453.79 670.87,452.31" fill="#222c44"/><polygon points="667.96,452.17 670.93,453.65 670.93,458.94 667.96,457.45" fill="#222c44"/><polygon points="676.63,449.92 679.50,451.35 679.50,456.50 676.63,455.07" fill="#222c44"/><polygon points="673.77,455.03 676.64,456.46 676.64,461.61 673.77,460.18" fill="#222c44"/><polygon points="682.20,452.72 684.96,454.10 684.96,459.11 682.20,457.73" fill="#222c44"/><polygon points="679.39,457.80 682.15,459.18 682.15,464.19 679.39,462.81" fill="#222c44"/><polygon points="687.57,455.42 690.24,456.76 690.24,461.63 687.57,460.30" fill="#222c44"/><polygon points="684.81,460.47 687.48,461.80 687.48,466.68 684.81,465.35" fill="#222c44"/><polygon points="692.76,458.04 695.33,459.32 695.33,464.07 692.76,462.79" fill="#222c44"/><polygon points="690.05,463.05 692.62,464.33 692.62,469.09 690.05,467.80" fill="#222c44"/><polygon points="697.78,460.56 700.26,461.80 700.26,466.43 697.78,465.19" fill="#222c44"/><polygon points="695.11,465.54 697.59,466.78 697.59,471.41 695.11,470.17" fill="#222c44"/><polygon points="702.62,463.00 705.01,464.19 705.01,468.70 702.62,467.51" fill="#222c44"/><polygon points="700.00,467.95 702.39,469.15 702.39,473.66 700.00,472.46" fill="#222c44"/><polygon points="707.30,465.35 709.61,466.50 709.61,470.90 707.30,469.75" fill="#222c44"/><polygon points="704.72,470.28 707.03,471.43 707.03,475.82 704.72,474.67" fill="#222c44"/><polygon points="711.82,467.63 714.05,468.74 714.05,473.02 711.82,471.91" fill="#222c44"/><polygon points="709.29,472.52 711.51,473.63 711.51,477.92 709.29,476.81" fill="#222c44"/><polygon points="716.19,469.82 718.33,470.89 718.33,475.07 716.19,474.00" fill="#222c44"/><polygon points="713.69,474.69 715.84,475.77 715.84,479.94 713.69,478.87" fill="#222c44"/><polygon points="720.41,471.94 722.48,472.98 722.48,477.05 720.41,476.02" fill="#222c44"/><polygon points="717.95,476.79 720.02,477.82 720.02,481.90 717.95,480.87" fill="#222c44"/><polygon points="724.49,473.99 726.48,474.99 726.48,478.97 724.49,477.97" fill="#222c44"/><polygon points="722.06,478.82 724.06,479.81 724.06,483.79 722.06,482.79" fill="#222c44"/><polygon points="728.42,475.98 730.34,476.93 730.34,480.82 728.42,479.86" fill="#222c44"/><polygon points="726.04,480.77 727.96,481.73 727.96,485.61 726.04,484.65" fill="#222c44"/><polygon points="732.23,477.89 734.08,478.81 734.08,482.60 732.23,481.68" fill="#222c44"/><polygon points="729.88,482.66 731.72,483.59 731.72,487.38 729.88,486.45" fill="#222c44"/><polygon points="735.90,479.74 737.68,480.63 737.68,484.33 735.90,483.44" fill="#222c44"/><polygon points="733.58,484.49 735.36,485.38 735.36,489.08 733.58,488.19" fill="#222c44"/><polygon points="739.45,481.52 741.17,482.38 741.17,485.99 739.45,485.13" fill="#222c44"/><polygon points="742.88,483.25 744.53,484.07 744.53,487.60 742.88,486.78" fill="#222c44"/><text x="666.15" y="445.33" transform="rotate(27 666.15 445.33)" font-size="3.4" font-weight="bold" fill="#c3142d" font-family="Liberation Sans, sans-serif" textLength="16.5" lengthAdjust="spacingAndGlyphs">NETFLIX</text></g><text x="622.10" y="495.20" font-size="3.25" fill="#1c1c1c" textLength="59.60" lengthAdjust="spacingAndGlyphs">Welcome to our first newsletter of 2019! It's</text><text x="622.10" y="499.46" font-size="3.25" fill="#1c1c1c" textLength="59.60" lengthAdjust="spacingAndGlyphs">been a while since the last one, and a lot has</text><text x="622.10" y="503.73" font-size="3.25" fill="#1c1c1c" textLength="59.60" lengthAdjust="spacingAndGlyphs">happened. We promise to keep them coming</text><text x="622.10" y="508.00" font-size="3.25" fill="#1c1c1c" textLength="53.50" lengthAdjust="spacingAndGlyphs">every two months hereafter, and permit</text><text x="622.10" y="512.26" font-size="3.25" fill="#1c1c1c" textLength="59.60" lengthAdjust="spacingAndGlyphs">ourselves to make this one rather long. The</text><text x="622.10" y="516.52" font-size="3.25" fill="#1c1c1c" textLength="57.00" lengthAdjust="spacingAndGlyphs">big news is the beginning of our launch in</text><text x="622.10" y="520.79" font-size="3.25" fill="#1c1c1c" textLength="53.50" lengthAdjust="spacingAndGlyphs">the American market, but there are also</text><text x="622.10" y="525.05" font-size="3.25" fill="#1c1c1c" textLength="57.00" lengthAdjust="spacingAndGlyphs">interesting updates on sales, development,</text><text x="622.10" y="529.32" font-size="3.25" fill="#1c1c1c" textLength="53.50" lengthAdjust="spacingAndGlyphs">mentors and (of course) the investment</text><text x="622.10" y="533.59" font-size="3.25" fill="#1c1c1c" textLength="38.50" lengthAdjust="spacingAndGlyphs">round that closed in January.</text><text x="622.10" y="540.20" font-size="3.25" fill="#1c1c1c" font-weight="bold" textLength="19.00" lengthAdjust="spacingAndGlyphs">New capital:</text><text x="641.60" y="540.20" font-size="3.25" fill="#1c1c1c" textLength="35.50" lengthAdjust="spacingAndGlyphs">The investment round was</text><text x="622.10" y="544.46" font-size="3.25" fill="#1c1c1c" textLength="58.00" lengthAdjust="spacingAndGlyphs">successful. We raised 2.13 MNOK to match</text><text x="685.30" y="495.20" font-size="3.25" fill="#1c1c1c" textLength="50.00" lengthAdjust="spacingAndGlyphs">the 2.05 MNOK loan from Innovation</text><text x="685.30" y="499.46" font-size="3.25" fill="#1c1c1c" textLength="48.00" lengthAdjust="spacingAndGlyphs">Norway. Including the development</text><text x="685.30" y="503.73" font-size="3.25" fill="#1c1c1c" textLength="59.50" lengthAdjust="spacingAndGlyphs">agreement with Filmlance International, the</text><text x="685.30" y="508.00" font-size="3.25" fill="#1c1c1c" textLength="57.00" lengthAdjust="spacingAndGlyphs">total new capital is 5 MNOK, partly tied to</text><text x="685.30" y="512.26" font-size="3.25" fill="#1c1c1c" textLength="58.50" lengthAdjust="spacingAndGlyphs">the successful completion of milestones. All</text><text x="685.30" y="516.52" font-size="3.25" fill="#1c1c1c" textLength="58.00" lengthAdjust="spacingAndGlyphs">formalities associated with this process are</text><text x="685.30" y="520.79" font-size="3.25" fill="#1c1c1c" textLength="17.60" lengthAdjust="spacingAndGlyphs">now finalized.</text><text x="685.30" y="527.53" font-size="3.25" fill="#1c1c1c" font-weight="bold" textLength="20.00" lengthAdjust="spacingAndGlyphs">New owners:</text><text x="705.80" y="527.53" font-size="3.25" fill="#1c1c1c" textLength="36.00" lengthAdjust="spacingAndGlyphs">We would especially like to</text><text x="685.30" y="531.79" font-size="3.25" fill="#1c1c1c" textLength="52.00" lengthAdjust="spacingAndGlyphs">warmly welcome our new owners to the</text><text x="685.30" y="536.06" font-size="3.25" fill="#1c1c1c" textLength="58.50" lengthAdjust="spacingAndGlyphs">Drylab family: Unni Jacobsen, Torstein Jahr,</text><text x="685.30" y="540.32" font-size="3.25" fill="#1c1c1c" textLength="60.00" lengthAdjust="spacingAndGlyphs">Suzanne Bolstad, Eivind Bergene, Turid Brun,</text><text x="685.30" y="544.59" font-size="3.25" fill="#1c1c1c" textLength="53.00" lengthAdjust="spacingAndGlyphs">Vigdis Trondsen, Lea Blindheim, Kristine</text><text x="622.5" y="558.2" font-size="9.9" fill="#f9a53d" stroke="#f9a53d" stroke-width="0.25" textLength="13.9" lengthAdjust="spacingAndGlyphs">34</text><text x="622.10" y="563.60" font-size="3.25" fill="#111" font-weight="bold" textLength="14.80" lengthAdjust="spacingAndGlyphs">meetings</text><text x="624.20" y="568.10" font-size="3.25" fill="#111" font-weight="bold" textLength="10.40" lengthAdjust="spacingAndGlyphs">NY·SF</text><text x="624.20" y="572.70" font-size="3.25" fill="#111" font-weight="bold" textLength="10.40" lengthAdjust="spacingAndGlyphs">LA·LV</text><text x="639.90" y="553.10" font-size="3.1" fill="#1c1c1c" textLength="105.90" lengthAdjust="spacingAndGlyphs">Academy of Motion Picture Arts and Sciences · Alesha &amp; Jamie Metzger · Amazon</text><text x="639.90" y="557.16" font-size="3.1" fill="#1c1c1c" textLength="105.90" lengthAdjust="spacingAndGlyphs">AWS · Apple · Caitlin Burns, PGA · Carlos Melcer · Chimney L.A. · Dado Valentic ·</text><text x="639.90" y="561.22" font-size="3.1" fill="#1c1c1c" textLength="105.90" lengthAdjust="spacingAndGlyphs">Dave Stump · DIT WIT · ERA NYC · Facebook · Fancy Film · FilmLight · Geo Labelle ·</text><text x="639.90" y="565.28" font-size="3.1" fill="#1c1c1c" textLength="105.90" lengthAdjust="spacingAndGlyphs">Google · IBM · Innovation Norway (NYC) · Innovation Norway (SF) · International</text><text x="639.90" y="569.34" font-size="3.1" fill="#1c1c1c" textLength="105.90" lengthAdjust="spacingAndGlyphs">Cinematographers Guild · NBC · Local 871 · Netflix · Pomfort · Radiant Images ·</text><text x="639.90" y="573.40" font-size="3.1" fill="#1c1c1c" textLength="86.80" lengthAdjust="spacingAndGlyphs">Screening Room · Signiant · Moods of Norway · Tapad · Team Downey</text><text x="668.2" y="437.1" font-size="3.4" fill="#eef3ff" textLength="35" lengthAdjust="spacingAndGlyphs">Adjust the size of the picture</text><rect x="729" y="519.1" width="26.6" height="4" fill="#fdeaea" stroke="#e02020" stroke-width="0.8"/><text x="730.2" y="522.3" font-size="2.9" fill="#e02020" textLength="24" lengthAdjust="spacingAndGlyphs">Sign this on this week</text><path d="M729 521.4 L705.6 523.6" stroke="#e02020" stroke-width="0.8"/><circle cx="705.4" cy="523.6" r="0.9" fill="#e02020"/><rect x="689" y="574.8" width="4.2" height="4.2" fill="#fbc540"/><path d="M690 576.2 H692.2 M690 577.6 H692.2" stroke="#fff" stroke-width="0.5"/></g>
<g clip-path="url(#row2clip)"><g transform="translate(0 278)"><text x="622.6" y="413.6" font-size="19.3" font-weight="bold" fill="#f9a740" stroke="#f9a740" stroke-width="0.3" textLength="70.4" lengthAdjust="spacingAndGlyphs">Drylab</text><text x="694.4" y="413.6" font-size="19.3" fill="#f9b060" stroke="#ffffff" stroke-width="0.85" textLength="54" lengthAdjust="spacingAndGlyphs">News</text><text x="692.80" y="419.30" font-size="3.2" fill="#fbd0a0" textLength="52.40" lengthAdjust="spacingAndGlyphs">for investors &amp; friends · May 2019</text><g clip-path="url(#photoclip)"><rect x="622.1" y="425.1" width="123.8" height="63.6" fill="url(#sky)"/><polygon points="665.29,441.85 745.93,482.79 745.93,488.75 727.94,488.75 671.49,463.56 665.91,459.22" fill="#e4e1d8"/><polygon points="672.73,463.94 728.56,488.75 705.61,488.75 672.73,476.59" fill="url(#glass)"/><polygon points="672.73,476.59 705.61,488.75 689.48,488.75 672.73,481.80" fill="#dedad0"/><polygon points="672.73,481.80 689.48,488.75 672.73,488.75" fill="#2c3446"/><polygon points="674.59,483.41 676.33,484.16 676.33,488.75 674.59,488.75" fill="#d8d4ca"/><polygon points="679.31,483.41 681.04,484.16 681.04,488.75 679.31,488.75" fill="#d8d4ca"/><polygon points="684.02,483.41 685.76,484.16 685.76,488.75 684.02,488.75" fill="#d8d4ca"/><polygon points="665.91,459.22 644.19,488.75 672.73,488.75 672.73,463.94 671.49,463.32" fill="#b9b3a6"/><polygon points="665.91,459.22 644.19,488.75 648.78,488.75 668.64,463.94 672.73,465.67 672.73,463.94 671.49,463.32" fill="#ebe8e1"/><polygon points="668.14,474.85 669.88,474.11 669.88,480.31 668.14,481.06" fill="#46566a"/><polygon points="664.42,479.20 666.03,478.45 666.03,484.03 664.42,484.78" fill="#46566a"/><polygon points="660.94,483.29 662.56,482.55 662.56,488.00 660.94,488.75" fill="#46566a"/><polygon points="657.22,486.76 658.71,486.02 658.71,489.62 657.22,490.36" fill="#46566a"/><polygon points="669.63,468.03 671.36,467.29 671.36,472.25 669.63,472.99" fill="#46566a"/><polygon points="665.29,441.85 641.71,479.69 641.09,488.75 644.44,488.75 666.03,459.22" fill="#e9e6de"/><polygon points="664.17,447.68 642.70,481.80 643.20,486.89 664.54,457.61" fill="url(#lglass)"/><polygon points="665.29,441.85 666.03,459.22 666.53,459.47 665.78,442.10" fill="#f4f2ec"/><polygon points="670.87,447.02 673.84,448.51 673.84,453.79 670.87,452.31" fill="#222c44"/><polygon points="667.96,452.17 670.93,453.65 670.93,458.94 667.96,457.45" fill="#222c44"/><polygon points="676.63,449.92 679.50,451.35 679.50,456.50 676.63,455.07" fill="#222c44"/><polygon points="673.77,455.03 676.64,456.46 676.64,461.61 673.77,460.18" fill="#222c44"/><polygon points="682.20,452.72 684.96,454.10 684.96,459.11 682.20,457.73" fill="#222c44"/><polygon points="679.39,457.80 682.15,459.18 682.15,464.19 679.39,462.81" fill="#222c44"/><polygon points="687.57,455.42 690.24,456.76 690.24,461.63 687.57,460.30" fill="#222c44"/><polygon points="684.81,460.47 687.48,461.80 687.48,466.68 684.81,465.35" fill="#222c44"/><polygon points="692.76,458.04 695.33,459.32 695.33,464.07 692.76,462.79" fill="#222c44"/><polygon points="690.05,463.05 692.62,464.33 692.62,469.09 690.05,467.80" fill="#222c44"/><polygon points="697.78,460.56 700.26,461.80 700.26,466.43 697.78,465.19" fill="#222c44"/><polygon points="695.11,465.54 697.59,466.78 697.59,471.41 695.11,470.17" fill="#222c44"/><polygon points="702.62,463.00 705.01,464.19 705.01,468.70 702.62,467.51" fill="#222c44"/><polygon points="700.00,467.95 702.39,469.15 702.39,473.66 700.00,472.46" fill="#222c44"/><polygon points="707.30,465.35 709.61,466.50 709.61,470.90 707.30,469.75" fill="#222c44"/><polygon points="704.72,470.28 707.03,471.43 707.03,475.82 704.72,474.67" fill="#222c44"/><polygon points="711.82,467.63 714.05,468.74 714.05,473.02 711.82,471.91" fill="#222c44"/><polygon points="709.29,472.52 711.51,473.63 711.51,477.92 709.29,476.81" fill="#222c44"/><polygon points="716.19,469.82 718.33,470.89 718.33,475.07 716.19,474.00" fill="#222c44"/><polygon points="713.69,474.69 715.84,475.77 715.84,479.94 713.69,478.87" fill="#222c44"/><polygon points="720.41,471.94 722.48,472.98 722.48,477.05 720.41,476.02" fill="#222c44"/><polygon points="717.95,476.79 720.02,477.82 720.02,481.90 717.95,480.87" fill="#222c44"/><polygon points="724.49,473.99 726.48,474.99 726.48,478.97 724.49,477.97" fill="#222c44"/><polygon points="722.06,478.82 724.06,479.81 724.06,483.79 722.06,482.79" fill="#222c44"/><polygon points="728.42,475.98 730.34,476.93 730.34,480.82 728.42,479.86" fill="#222c44"/><polygon points="726.04,480.77 727.96,481.73 727.96,485.61 726.04,484.65" fill="#222c44"/><polygon points="732.23,477.89 734.08,478.81 734.08,482.60 732.23,481.68" fill="#222c44"/><polygon points="729.88,482.66 731.72,483.59 731.72,487.38 729.88,486.45" fill="#222c44"/><polygon points="735.90,479.74 737.68,480.63 737.68,484.33 735.90,483.44" fill="#222c44"/><polygon points="733.58,484.49 735.36,485.38 735.36,489.08 733.58,488.19" fill="#222c44"/><polygon points="739.45,481.52 741.17,482.38 741.17,485.99 739.45,485.13" fill="#222c44"/><polygon points="742.88,483.25 744.53,484.07 744.53,487.60 742.88,486.78" fill="#222c44"/><text x="666.15" y="445.33" transform="rotate(27 666.15 445.33)" font-size="3.4" font-weight="bold" fill="#c3142d" font-family="Liberation Sans, sans-serif" textLength="16.5" lengthAdjust="spacingAndGlyphs">NETFLIX</text></g><text x="622.10" y="495.20" font-size="3.25" fill="#1c1c1c" textLength="59.60" lengthAdjust="spacingAndGlyphs">Welcome to our first newsletter of 2019! It's</text><text x="622.10" y="499.46" font-size="3.25" fill="#1c1c1c" textLength="59.60" lengthAdjust="spacingAndGlyphs">been a while since the last one, and a lot has</text><text x="622.10" y="503.73" font-size="3.25" fill="#1c1c1c" textLength="59.60" lengthAdjust="spacingAndGlyphs">happened. We promise to keep them coming</text><text x="622.10" y="508.00" font-size="3.25" fill="#1c1c1c" textLength="53.50" lengthAdjust="spacingAndGlyphs">every two months hereafter, and permit</text><text x="622.10" y="512.26" font-size="3.25" fill="#1c1c1c" textLength="59.60" lengthAdjust="spacingAndGlyphs">ourselves to make this one rather long. The</text><text x="622.10" y="516.52" font-size="3.25" fill="#1c1c1c" textLength="57.00" lengthAdjust="spacingAndGlyphs">big news is the beginning of our launch in</text><text x="622.10" y="520.79" font-size="3.25" fill="#1c1c1c" textLength="53.50" lengthAdjust="spacingAndGlyphs">the American market, but there are also</text><text x="622.10" y="525.05" font-size="3.25" fill="#1c1c1c" textLength="57.00" lengthAdjust="spacingAndGlyphs">interesting updates on sales, development,</text><text x="622.10" y="529.32" font-size="3.25" fill="#1c1c1c" textLength="53.50" lengthAdjust="spacingAndGlyphs">mentors and (of course) the investment</text><text x="622.10" y="533.59" font-size="3.25" fill="#1c1c1c" textLength="38.50" lengthAdjust="spacingAndGlyphs">round that closed in January.</text><text x="622.10" y="540.20" font-size="3.25" fill="#1c1c1c" font-weight="bold" textLength="19.00" lengthAdjust="spacingAndGlyphs">New capital:</text><text x="641.60" y="540.20" font-size="3.25" fill="#1c1c1c" textLength="35.50" lengthAdjust="spacingAndGlyphs">The investment round was</text><text x="622.10" y="544.46" font-size="3.25" fill="#1c1c1c" textLength="58.00" lengthAdjust="spacingAndGlyphs">successful. We raised 2.13 MNOK to match</text><text x="685.30" y="495.20" font-size="3.25" fill="#1c1c1c" textLength="50.00" lengthAdjust="spacingAndGlyphs">the 2.05 MNOK loan from Innovation</text><text x="685.30" y="499.46" font-size="3.25" fill="#1c1c1c" textLength="48.00" lengthAdjust="spacingAndGlyphs">Norway. Including the development</text><text x="685.30" y="503.73" font-size="3.25" fill="#1c1c1c" textLength="59.50" lengthAdjust="spacingAndGlyphs">agreement with Filmlance International, the</text><text x="685.30" y="508.00" font-size="3.25" fill="#1c1c1c" textLength="57.00" lengthAdjust="spacingAndGlyphs">total new capital is 5 MNOK, partly tied to</text><text x="685.30" y="512.26" font-size="3.25" fill="#1c1c1c" textLength="58.50" lengthAdjust="spacingAndGlyphs">the successful completion of milestones. All</text><text x="685.30" y="516.52" font-size="3.25" fill="#1c1c1c" textLength="58.00" lengthAdjust="spacingAndGlyphs">formalities associated with this process are</text><text x="685.30" y="520.79" font-size="3.25" fill="#1c1c1c" textLength="17.60" lengthAdjust="spacingAndGlyphs">now finalized.</text><text x="685.30" y="527.53" font-size="3.25" fill="#1c1c1c" font-weight="bold" textLength="20.00" lengthAdjust="spacingAndGlyphs">New owners:</text><text x="705.80" y="527.53" font-size="3.25" fill="#1c1c1c" textLength="36.00" lengthAdjust="spacingAndGlyphs">We would especially like to</text><text x="685.30" y="531.79" font-size="3.25" fill="#1c1c1c" textLength="52.00" lengthAdjust="spacingAndGlyphs">warmly welcome our new owners to the</text><text x="685.30" y="536.06" font-size="3.25" fill="#1c1c1c" textLength="58.50" lengthAdjust="spacingAndGlyphs">Drylab family: Unni Jacobsen, Torstein Jahr,</text><text x="685.30" y="540.32" font-size="3.25" fill="#1c1c1c" textLength="60.00" lengthAdjust="spacingAndGlyphs">Suzanne Bolstad, Eivind Bergene, Turid Brun,</text><text x="685.30" y="544.59" font-size="3.25" fill="#1c1c1c" textLength="53.00" lengthAdjust="spacingAndGlyphs">Vigdis Trondsen, Lea Blindheim, Kristine</text><text x="622.5" y="558.2" font-size="9.9" fill="#f9a53d" stroke="#f9a53d" stroke-width="0.25" textLength="13.9" lengthAdjust="spacingAndGlyphs">34</text><text x="622.10" y="563.60" font-size="3.25" fill="#111" font-weight="bold" textLength="14.80" lengthAdjust="spacingAndGlyphs">meetings</text><text x="624.20" y="568.10" font-size="3.25" fill="#111" font-weight="bold" textLength="10.40" lengthAdjust="spacingAndGlyphs">NY·SF</text><text x="624.20" y="572.70" font-size="3.25" fill="#111" font-weight="bold" textLength="10.40" lengthAdjust="spacingAndGlyphs">LA·LV</text><text x="639.90" y="553.10" font-size="3.1" fill="#1c1c1c" textLength="105.90" lengthAdjust="spacingAndGlyphs">Academy of Motion Picture Arts and Sciences · Alesha &amp; Jamie Metzger · Amazon</text><text x="639.90" y="557.16" font-size="3.1" fill="#1c1c1c" textLength="105.90" lengthAdjust="spacingAndGlyphs">AWS · Apple · Caitlin Burns, PGA · Carlos Melcer · Chimney L.A. · Dado Valentic ·</text><text x="639.90" y="561.22" font-size="3.1" fill="#1c1c1c" textLength="105.90" lengthAdjust="spacingAndGlyphs">Dave Stump · DIT WIT · ERA NYC · Facebook · Fancy Film · FilmLight · Geo Labelle ·</text><text x="639.90" y="565.28" font-size="3.1" fill="#1c1c1c" textLength="105.90" lengthAdjust="spacingAndGlyphs">Google · IBM · Innovation Norway (NYC) · Innovation Norway (SF) · International</text><text x="639.90" y="569.34" font-size="3.1" fill="#1c1c1c" textLength="105.90" lengthAdjust="spacingAndGlyphs">Cinematographers Guild · NBC · Local 871 · Netflix · Pomfort · Radiant Images ·</text><text x="639.90" y="573.40" font-size="3.1" fill="#1c1c1c" textLength="86.80" lengthAdjust="spacingAndGlyphs">Screening Room · Signiant · Moods of Norway · Tapad · Team Downey</text></g></g>
</g>
<g stroke="#222" stroke-width="1"><path d="M823.2 390 V396.6 M814 398.6 H821.6 M928.6 390 V396.6 M930.4 398.6 H937.6 M814 576.1 H821.6 M823.2 578.3 V585 M930.4 576.1 H937.6 M928.6 578.3 V585"/></g><path d="M867.9 505.6 H884 M868 529.4 H884" stroke="#aaa" stroke-width="0.5"/><text x="873.8" y="418.95" font-size="2.8" fill="#4a4a4a" font-weight="bold" font-family="Liberation Serif, serif" textLength="4.60" lengthAdjust="spacingAndGlyphs">AN</text><text x="866.8" y="431.50" font-size="5.3" fill="#2a2a2a" font-family="Liberation Serif, serif" textLength="18.60" lengthAdjust="spacingAndGlyphs">ESSAY</text><text x="870.8" y="441.42" font-size="2.4" fill="#4a4a4a" font-weight="bold" font-family="Liberation Serif, serif" textLength="10.40" lengthAdjust="spacingAndGlyphs">ON THE</text><text x="846.2" y="450.59" font-size="3.8" fill="#2a2a2a" font-style="italic" font-family="Liberation Serif, serif" textLength="59.20" lengthAdjust="spacingAndGlyphs">PRINCIPLE OF POPULATION,</text><text x="866" y="458.52" font-size="2.4" fill="#4a4a4a" font-weight="bold" font-family="Liberation Serif, serif" textLength="19.80" lengthAdjust="spacingAndGlyphs">AS IT AFFECTS</text><text x="836.8" y="468.12" font-size="3.0" fill="#2a2a2a" font-weight="bold" font-family="Liberation Serif, serif" textLength="78.20" lengthAdjust="spacingAndGlyphs">THE FUTURE IMPROVEMENT OF SOCIETY.</text><text x="865.5" y="476.92" font-size="2.4" fill="#4a4a4a" font-weight="bold" font-family="Liberation Serif, serif" textLength="20.70" lengthAdjust="spacingAndGlyphs">WITH REMARKS</text><text x="846" y="484.69" font-size="2.9" fill="#4a4a4a" font-weight="bold" font-family="Liberation Serif, serif" textLength="60.00" lengthAdjust="spacingAndGlyphs">ON THE SPECULATIONS OF MR. GODWIN,</text><text x="864" y="492.79" font-size="2.9" fill="#4a4a4a" font-weight="bold" font-family="Liberation Serif, serif" textLength="24.00" lengthAdjust="spacingAndGlyphs">M. CONDORCET,</text><text x="859" y="500.79" font-size="2.9" fill="#4a4a4a" font-weight="bold" font-family="Liberation Serif, serif" textLength="32.70" lengthAdjust="spacingAndGlyphs">AND OTHER WRITERS.</text><text x="869" y="510.82" font-size="2.4" fill="#4a4a4a" font-weight="bold" font-family="Liberation Serif, serif" textLength="13.20" lengthAdjust="spacingAndGlyphs">LONDON:</text><text x="849.2" y="518.82" font-size="2.7" fill="#4a4a4a" font-weight="bold" font-family="Liberation Serif, serif" textLength="53.40" lengthAdjust="spacingAndGlyphs">PRINTED FOR J. JOHNSON, IN ST. PAUL'S</text><text x="866" y="525.82" font-size="2.4" fill="#4a4a4a" font-weight="bold" font-family="Liberation Serif, serif" textLength="20.00" lengthAdjust="spacingAndGlyphs">CHURCH-YARD.</text><text x="870.9" y="538.86" font-size="4.6" fill="#2a2a2a" font-family="Liberation Serif, serif" textLength="10.10" lengthAdjust="spacingAndGlyphs">1798.</text>
<rect x="417" y="659" width="150" height="8" fill="#f7f7f7"/><rect x="801" y="659" width="150" height="7.4" fill="#f7f7f7"/>
<text x="430.3" y="679.2" font-size="3.4" font-weight="bold" fill="#17a673" font-family="Liberation Sans, sans-serif" textLength="64.5" lengthAdjust="spacingAndGlyphs">So Glad to Have You Here at SwifDoo PDF</text>
<text x="552.2" y="679.2" font-size="3.4" font-weight="bold" fill="#17a673" font-family="Liberation Sans, sans-serif">9</text></g></svg>
</body></html>
